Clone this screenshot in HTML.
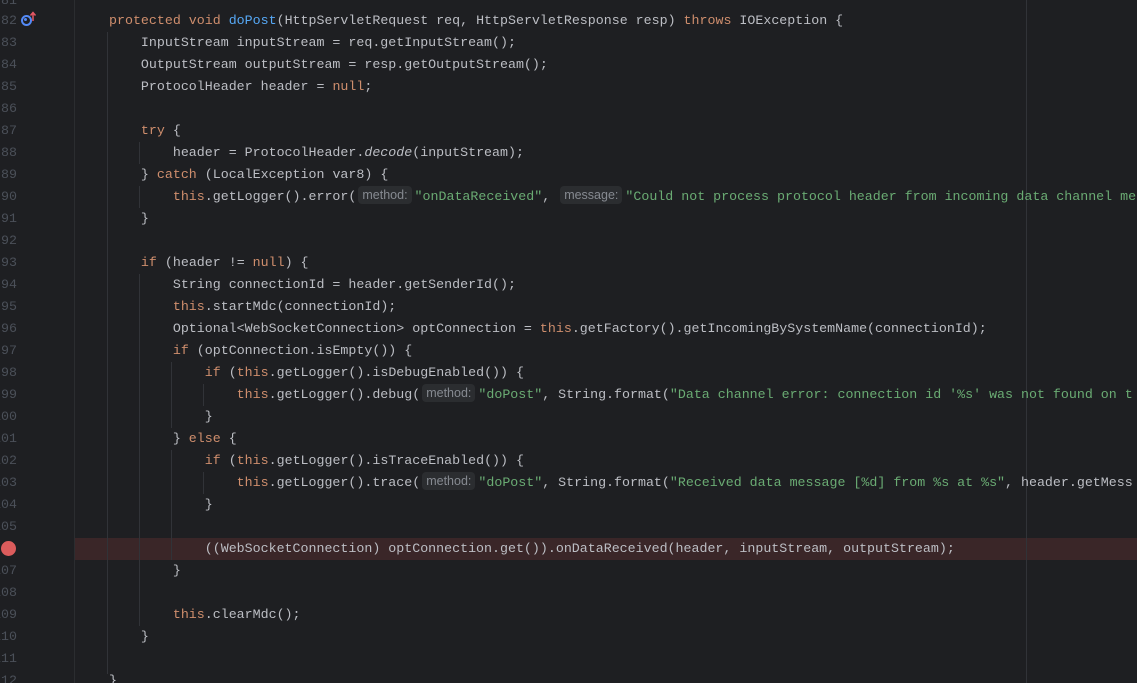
<!DOCTYPE html>
<html style="overflow:hidden"><head><meta charset="utf-8"><style>
html,body{margin:0;width:1137px;height:683px;overflow:hidden}
body{background:#1e1f22;position:relative;font-family:"Liberation Mono",monospace;font-size:13.3px;color:#bcbec4}
#w{position:absolute;left:0;top:2px;width:1137px;height:681px}
#o{position:absolute;left:0;top:0;width:1137px;height:683px;overflow:hidden}
.ln{position:absolute;left:-10px;width:27px;text-align:right;color:#4b5059;height:22px;line-height:22px}
.c{position:absolute;left:109px;white-space:pre;height:22px;line-height:22px}
.k{color:#cf8e6d}.m{color:#56a8f5}.s{color:#6aab73}.i{font-style:italic}
.h{display:inline-block;background:#2b2d30;color:#868a91;font-family:"Liberation Sans",sans-serif;font-size:12.5px;line-height:18px;padding:0 4px;border-radius:4px;margin:0 3px 0 2px;vertical-align:middle;position:relative;top:-1px}
.g{position:absolute;width:1px;background:#313338}
</style></head><body><div id="o"><div id="w">
<div style="position:absolute;left:75px;top:536px;width:1062px;height:22px;background:#3a2628"></div>
<div style="position:absolute;left:74px;top:-2px;width:1px;height:683px;background:#2b2d30"></div>
<div style="position:absolute;left:1026px;top:-2px;width:1px;height:683px;background:#313338"></div>
<div class="g" style="left:107px;top:30px;height:642px"></div>
<div class="g" style="left:139px;top:140px;height:22px"></div>
<div class="g" style="left:139px;top:184px;height:22px"></div>
<div class="g" style="left:139px;top:272px;height:352px"></div>
<div class="g" style="left:171px;top:360px;height:66px"></div>
<div class="g" style="left:171px;top:448px;height:110px"></div>
<div class="g" style="left:203px;top:382px;height:22px"></div>
<div class="g" style="left:203px;top:470px;height:22px"></div>
<div style="position:absolute;left:21px;top:13px;width:7px;height:7px;border:2px solid #548af7;border-radius:50%"></div>
<div style="position:absolute;left:24px;top:16px;width:3px;height:3px;background:#548af7;border-radius:50%"></div>
<svg style="position:absolute;left:29px;top:9px" width="8" height="10"><path d="M4 10V2M1.5 4.5L4 1.5 6.5 4.5" stroke="#e55765" stroke-width="1.5" fill="none"/></svg>
<div style="position:absolute;left:1px;top:539px;width:15px;height:15px;border-radius:50%;background:#db5c5c"></div>
<div class="ln" style="top:-12px">81</div><div class="ln" style="top:8px">82</div><div class="ln" style="top:30px">83</div><div class="ln" style="top:52px">84</div><div class="ln" style="top:74px">85</div><div class="ln" style="top:96px">86</div><div class="ln" style="top:118px">87</div><div class="ln" style="top:140px">88</div><div class="ln" style="top:162px">89</div><div class="ln" style="top:184px">90</div><div class="ln" style="top:206px">91</div><div class="ln" style="top:228px">92</div><div class="ln" style="top:250px">93</div><div class="ln" style="top:272px">94</div><div class="ln" style="top:294px">95</div><div class="ln" style="top:316px">96</div><div class="ln" style="top:338px">97</div><div class="ln" style="top:360px">98</div><div class="ln" style="top:382px">99</div><div class="ln" style="top:404px">100</div><div class="ln" style="top:426px">101</div><div class="ln" style="top:448px">102</div><div class="ln" style="top:470px">103</div><div class="ln" style="top:492px">104</div><div class="ln" style="top:514px">105</div><div class="ln" style="top:558px">107</div><div class="ln" style="top:580px">108</div><div class="ln" style="top:602px">109</div><div class="ln" style="top:624px">110</div><div class="ln" style="top:646px">111</div><div class="ln" style="top:668px">112</div>
<div class="c" style="top:8px"><span class="k">protected void </span><span class="m">doPost</span>(HttpServletRequest req, HttpServletResponse resp) <span class="k">throws </span>IOException {</div>
<div class="c" style="top:30px">    InputStream inputStream = req.getInputStream();</div>
<div class="c" style="top:52px">    OutputStream outputStream = resp.getOutputStream();</div>
<div class="c" style="top:74px">    ProtocolHeader header = <span class="k">null</span>;</div>
<div class="c" style="top:118px">    <span class="k">try </span>{</div>
<div class="c" style="top:140px">        header = ProtocolHeader.<span class="i">decode</span>(inputStream);</div>
<div class="c" style="top:162px">    } <span class="k">catch </span>(LocalException var8) {</div>
<div class="c" style="top:184px">        <span class="k">this</span>.getLogger().error(<span class="h">method:</span><span class="s">"onDataReceived"</span>, <span class="h">message:</span><span class="s">"Could not process protocol header from incoming data channel me</span></div>
<div class="c" style="top:206px">    }</div>
<div class="c" style="top:250px">    <span class="k">if </span>(header != <span class="k">null</span>) {</div>
<div class="c" style="top:272px">        String connectionId = header.getSenderId();</div>
<div class="c" style="top:294px">        <span class="k">this</span>.startMdc(connectionId);</div>
<div class="c" style="top:316px">        Optional&lt;WebSocketConnection&gt; optConnection = <span class="k">this</span>.getFactory().getIncomingBySystemName(connectionId);</div>
<div class="c" style="top:338px">        <span class="k">if </span>(optConnection.isEmpty()) {</div>
<div class="c" style="top:360px">            <span class="k">if </span>(<span class="k">this</span>.getLogger().isDebugEnabled()) {</div>
<div class="c" style="top:382px">                <span class="k">this</span>.getLogger().debug(<span class="h">method:</span><span class="s">"doPost"</span>, String.format(<span class="s">"Data channel error: connection id '%s' was not found on t</span></div>
<div class="c" style="top:404px">            }</div>
<div class="c" style="top:426px">        } <span class="k">else </span>{</div>
<div class="c" style="top:448px">            <span class="k">if </span>(<span class="k">this</span>.getLogger().isTraceEnabled()) {</div>
<div class="c" style="top:470px">                <span class="k">this</span>.getLogger().trace(<span class="h">method:</span><span class="s">"doPost"</span>, String.format(<span class="s">"Received data message [%d] from %s at %s"</span>, header.getMess</div>
<div class="c" style="top:492px">            }</div>
<div class="c" style="top:536px">            ((WebSocketConnection) optConnection.get()).onDataReceived(header, inputStream, outputStream);</div>
<div class="c" style="top:558px">        }</div>
<div class="c" style="top:602px">        <span class="k">this</span>.clearMdc();</div>
<div class="c" style="top:624px">    }</div>
<div class="c" style="top:668px">}</div>
</div></div></body></html>
